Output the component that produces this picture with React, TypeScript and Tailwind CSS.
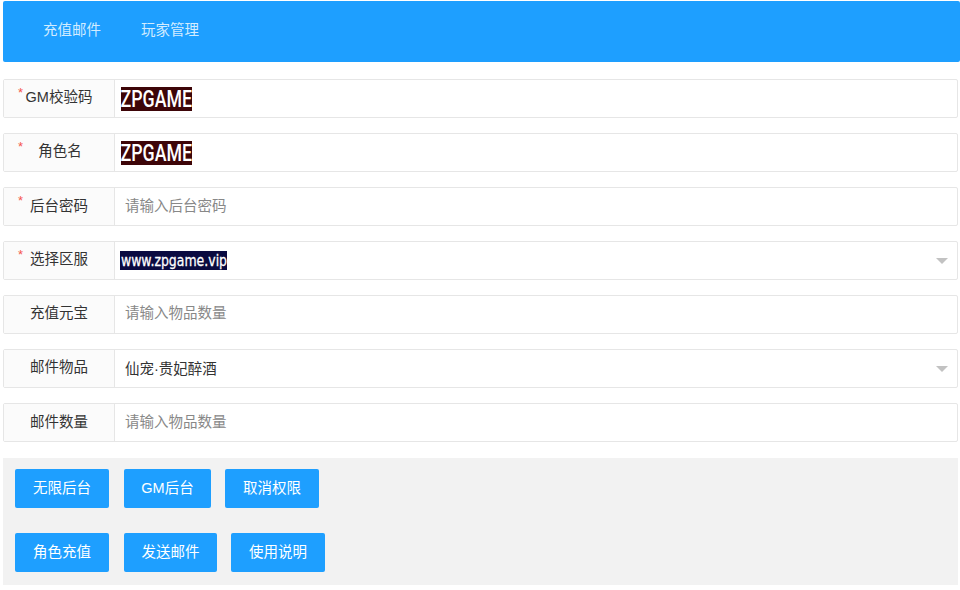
const font = "font-['Liberation_Sans','Noto_Sans_CJK_SC',sans-serif]";

function Caret() {
  return <div className="mr-[9px] h-0 w-0 border-x-[6px] border-t-[6px] border-x-transparent border-t-[#c2c2c2]" />;
}

function Row({ label, required, offset, up, children }: { label: string; required?: boolean; offset?: boolean; up?: boolean; children: React.ReactNode }) {
  return (
    <div className="flex h-[39px] rounded-[2px] border border-[#e6e6e6] bg-white">
      <div className="relative flex w-[111px] shrink-0 items-center justify-center border-r border-[#e6e6e6] bg-[#fbfbfb] text-[14.5px] text-[#333]">
        {required && <span className="absolute top-[6px] left-[14px] text-[13px] leading-[14px] text-[#f5564e]">*</span>}
        <span className={`${offset ? "ml-[2px]" : ""} ${up ? "pb-[2px]" : ""}`}>{label}</span>
      </div>
      <div className="flex min-w-0 flex-1 items-center justify-between">{children}</div>
    </div>
  );
}

function Placeholder({ text, up }: { text: string; up?: boolean }) {
  return <span className={`pl-[10px] text-[14.5px] text-[#888] ${up ? "pb-[2px]" : ""}`}>{text}</span>;
}

function Btn({ text, className }: { text: string; className: string }) {
  return (
    <button className={`flex h-[39px] items-center justify-center rounded-[2px] bg-[#1e9fff] text-[14.5px] text-white ${className}`}>
      {text}
    </button>
  );
}

function Zp() {
  return (
    <span className="ml-[6px] flex h-[24px] w-[71px] items-center justify-center bg-[#3d0508] font-['Roboto',sans-serif] text-white">
      <span className="inline-block scale-x-[0.74] text-[24px] leading-[24px] font-medium whitespace-nowrap">ZPGAME</span>
    </span>
  );
}

export default function App() {
  return (
    <div className={`${font} h-[590px] w-[960px] overflow-hidden bg-white pt-[1px] pl-[3px]`}>
      <div className="flex h-[61px] items-center gap-[40px] rounded-[2px] bg-[#1e9fff] pb-[2px] pl-[40px] text-[14.5px] text-[#d2ecff]">
        <span>充值邮件</span>
        <span>玩家管理</span>
      </div>
      <div className="mt-[17px] flex w-[955px] flex-col gap-[15px]">
        <Row label="GM校验码" required up><Zp /></Row>
        <Row label="角色名" required offset up><Zp /></Row>
        <Row label="后台密码" required><Placeholder text="请输入后台密码" /></Row>
        <Row label="选择区服" required up>
          <span className="ml-[5px] flex h-[19px] w-[107px] items-center justify-center bg-[#0a0a40] font-['DejaVu_Sans',sans-serif] text-white">
            <span className="inline-block scale-x-[0.78] text-[16px] leading-[19px] whitespace-nowrap [-webkit-text-stroke:0.3px_white]">www.zpgame.vip</span>
          </span>
          <Caret />
        </Row>
        <Row label="充值元宝" up><Placeholder text="请输入物品数量" up /></Row>
        <Row label="邮件物品" up>
          <span className="pt-[2px] pl-[10px] text-[14.5px] text-[#333]">仙宠·贵妃醉酒</span>
          <Caret />
        </Row>
        <Row label="邮件数量"><Placeholder text="请输入物品数量" /></Row>
      </div>
      <div className="mt-[16px] flex h-[127px] w-[955px] flex-col gap-[25px] bg-[#f2f2f2] pt-[11px] pl-[12px]">
        <div className="flex gap-[14px]">
          <Btn text="无限后台" className="mr-[1px] w-[94px]" />
          <Btn text="GM后台" className="w-[87px]" />
          <Btn text="取消权限" className="w-[94px]" />
        </div>
        <div className="flex gap-[14px]">
          <Btn text="角色充值" className="mr-[1px] w-[94px]" />
          <Btn text="发送邮件" className="w-[93px]" />
          <Btn text="使用说明" className="w-[94px]" />
        </div>
      </div>
    </div>
  );
}
